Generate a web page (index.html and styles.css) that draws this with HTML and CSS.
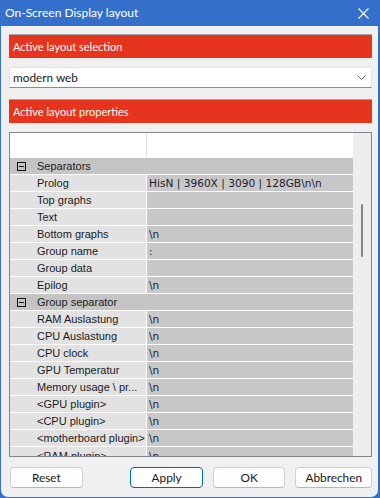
FILE: index.html
```html
<!DOCTYPE html>
<html lang="en">
<head>
    <meta charset="UTF-8">
    <meta name="viewport" content="width=device-width, initial-scale=1.0">
    <title>On-Screen Display layout</title>
    <link rel="stylesheet" href="styles.css">
</head>
<body>
    <div class="window">
        <div class="titlebar">
            <span class="title">On-Screen Display layout</span>
            <svg class="close" width="11" height="11" viewBox="0 0 11 11">
                <path d="M0.5 0.5 L10.5 10.5 M10.5 0.5 L0.5 10.5" stroke="#fff" stroke-width="1.1" fill="none"/>
            </svg>
        </div>

        <div class="content">
            <div class="section-bar">Active layout selection</div>

            <div class="combo">
                <span>modern web</span>
                <svg class="chevron" width="9" height="5" viewBox="0 0 9 5">
                    <path d="M0.5 0.5 L4.5 4.5 L8.5 0.5" stroke="#5f5f5f" stroke-width="1" fill="none"/>
                </svg>
            </div>

            <div class="section-bar second">Active layout properties</div>

            <div class="grid">
                <div class="grid-body">
                    <div class="grid-rows">
                        <div class="row head">
                            <div class="name"></div>
                            <div class="value"></div>
                        </div>

                        <div class="row category">
                            <span class="toggle"></span>
                            <span class="label">Separators</span>
                        </div>
                        <div class="row"><div class="name">Prolog</div><div class="value">HisN | 3960X | 3090 | 128GB\n\n</div></div>
                        <div class="row"><div class="name">Top graphs</div><div class="value"></div></div>
                        <div class="row"><div class="name">Text</div><div class="value"></div></div>
                        <div class="row"><div class="name">Bottom graphs</div><div class="value">\n</div></div>
                        <div class="row"><div class="name">Group name</div><div class="value">:</div></div>
                        <div class="row"><div class="name">Group data</div><div class="value"></div></div>
                        <div class="row"><div class="name">Epilog</div><div class="value">\n</div></div>

                        <div class="row category">
                            <span class="toggle"></span>
                            <span class="label">Group separator</span>
                        </div>
                        <div class="row"><div class="name">RAM Auslastung</div><div class="value">\n</div></div>
                        <div class="row"><div class="name">CPU Auslastung</div><div class="value">\n</div></div>
                        <div class="row"><div class="name">CPU clock</div><div class="value">\n</div></div>
                        <div class="row"><div class="name">GPU Temperatur</div><div class="value">\n</div></div>
                        <div class="row"><div class="name">Memory usage \ pr...</div><div class="value">\n</div></div>
                        <div class="row"><div class="name">&lt;GPU plugin&gt;</div><div class="value">\n</div></div>
                        <div class="row"><div class="name">&lt;CPU plugin&gt;</div><div class="value">\n</div></div>
                        <div class="row"><div class="name">&lt;motherboard plugin&gt;</div><div class="value">\n</div></div>
                        <div class="row last"><div class="name">&lt;RAM plugin&gt;</div><div class="value">\n</div></div>
                    </div>
                    <div class="scrollbar">
                        <div class="thumb"></div>
                    </div>
                </div>
            </div>

            <div class="buttons">
                <button class="btn">Reset</button>
                <div class="spacer"></div>
                <button class="btn default">Apply</button>
                <button class="btn">OK</button>
                <button class="btn wide">Abbrechen</button>
            </div>
        </div>
    </div>
</body>
</html>
```

FILE: styles.css
```css
html, body {
    margin: 0;
    padding: 0;
}
body {
    width: 380px;
    height: 498px;
    background-color: #3470cb;
    font-family: 'Lato', 'Noto Sans', sans-serif;
    font-size: 11px;
    overflow: hidden;
}
.window {
    width: 377px;
    height: 497px;
    margin-left: 1px;
    background-color: #f0f0f0;
    border-radius: 0 0 7px 7px;
    overflow: hidden;
}
.titlebar {
    height: 26px;
    margin-left: -1px;
    padding-left: 5px;
    background-color: #3470cb;
    color: #fff;
    display: flex;
    align-items: center;
    justify-content: space-between;
    font-size: 12px;
}
.title {
    line-height: 26px;
}
.close {
    margin-right: 9px;
    margin-top: 1px;
}
.content {
    padding-left: 8px;
    width: 363px;
}
.section-bar {
    margin-top: 8px;
    height: 23px;
    line-height: 23px;
    border-top: 1px solid #a3a3a3;
    background-color: #e6341d;
    color: #fff;
    padding-left: 4px;
}
.section-bar.second {
    margin-top: 11px;
}
.combo {
    margin-top: 9px;
    height: 19px;
    background-color: #fff;
    border: 1px solid #e3e3e3;
    border-bottom-color: #8a8a8a;
    display: flex;
    align-items: center;
    justify-content: space-between;
    padding: 0 5px 0 3px;
    color: #1a1a1a;
    font-size: 11.8px;
}
.grid {
    margin-top: 9px;
    height: 323px;
    border: 1px solid #82878f;
    background-color: #fff;
    overflow: hidden;
}
.grid-body {
    display: flex;
    height: 100%;
}
.grid-rows {
    width: 343px;
    font-family: 'Liberation Sans', Arial, sans-serif;
    font-size: 11px;
    color: #1b1b1b;
}
.row {
    display: flex;
    height: 16px;
    line-height: 16px;
    border-bottom: 1px solid #fff;
    white-space: nowrap;
}
.row .name {
    width: 109px;
    padding-left: 27px;
    background-color: #e2e2e2;
    border-right: 1px solid #fff;
    overflow: hidden;
}
.row .value {
    flex: 1;
    padding-left: 2px;
    background-color: #c8c8c8;
    color: #1c1c30;
    font-family: 'DejaVu Sans', Verdana, sans-serif;
    font-size: 10.6px;
    overflow: hidden;
}
.row.last {
    line-height: 18px;
}
.row.head {
    height: 25px;
    border-bottom: none;
}
.row.head .name {
    background-color: #fff;
    border-right: 1px solid #e4e4e4;
}
.row.head .value {
    background-color: #fff;
}
.row.category {
    background-color: #c4c4c4;
    align-items: center;
}
.toggle {
    position: relative;
    box-sizing: border-box;
    width: 9px;
    height: 9px;
    margin-left: 7px;
    margin-right: 11px;
    border: 1px solid #111;
}
.toggle::after {
    content: "";
    position: absolute;
    left: 1px;
    right: 1px;
    top: 3px;
    height: 1px;
    background-color: #111;
}
.scrollbar {
    width: 18px;
    background-color: #eeeeee;
    position: relative;
}
.thumb {
    position: absolute;
    left: 8px;
    top: 71px;
    width: 2px;
    height: 53px;
    background-color: #858585;
    border-radius: 1px;
}
.buttons {
    margin-top: 10px;
    display: flex;
    gap: 10px;
    padding-left: 1px;
}
.spacer {
    width: 28px;
}
.btn {
    width: 73px;
    height: 21px;
    padding: 0;
    border: 1px solid #d0d0d0;
    border-bottom-color: #b8b8b8;
    border-radius: 4px;
    background-color: #fdfdfd;
    font-family: 'Lato', 'Noto Sans', sans-serif;
    font-size: 11.8px;
    color: #1a1a1a;
}
.btn.default {
    border-color: #0067c0;
}
.btn.wide {
    width: 77px;
}
```
